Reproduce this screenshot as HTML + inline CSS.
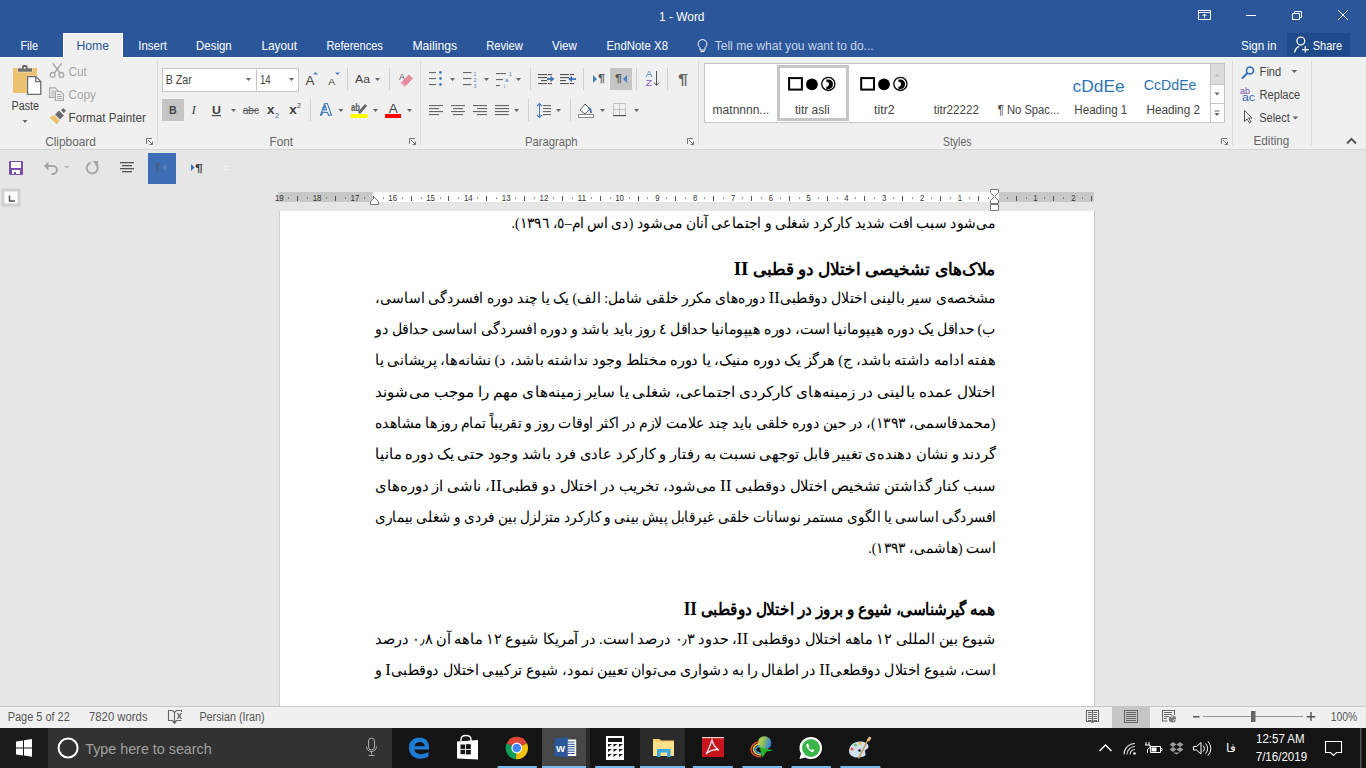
<!DOCTYPE html>
<html><head><meta charset="utf-8"><title>1 - Word</title>
<style>html,body{margin:0;padding:0;width:1366px;height:768px;overflow:hidden;background:#e6e6e6}
svg{position:absolute;left:0;top:0;font-family:"Liberation Sans",sans-serif}</style></head>
<body><svg width="1366" height="768" viewBox="0 0 1366 768">
<rect x="0" y="0" width="1366" height="57" fill="#2b579a" />
<rect x="0" y="57" width="1366" height="92" fill="#f0f0f0" />
<rect x="0" y="149" width="1366" height="1" fill="#d5d5d5" />
<rect x="0" y="150" width="1366" height="556" fill="#e6e6e6" />
<rect x="63" y="33" width="60" height="24" fill="#f0f0f0" />
<rect x="0" y="57" width="1366" height="1" fill="#fafbfc" />
<path d="M63.5 57V33.5H122.5V57" fill="none" stroke="#ffffff" stroke-width="1" />
<rect x="64" y="34" width="58" height="24" fill="#f0f0f0" />
<text x="659" y="21" font-size="12" fill="#fff" textLength="45.5" lengthAdjust="spacingAndGlyphs" >1 - Word</text>
<path d="M1198.5 10.5h12v9h-12z M1198.5 12.5h12 M1204.5 18v-4 M1202.5 16l2-2 2 2" fill="none" stroke="#fff" stroke-width="1" />
<path d="M1246 15.5h10" fill="none" stroke="#fff" stroke-width="1" />
<path d="M1292.5 13.5h7v6h-7z M1294.5 13.5v-2h7v6h-2" fill="none" stroke="#fff" stroke-width="1" />
<path d="M1338 10l10 10 M1348 10l-10 10" fill="none" stroke="#fff" stroke-width="1" />
<text x="20.4" y="49.5" font-size="13" fill="#fff" textLength="17.6" lengthAdjust="spacingAndGlyphs" >File</text>
<text x="138.2" y="49.5" font-size="13" fill="#fff" textLength="28.8" lengthAdjust="spacingAndGlyphs" >Insert</text>
<text x="196.1" y="49.5" font-size="13" fill="#fff" textLength="35.6" lengthAdjust="spacingAndGlyphs" >Design</text>
<text x="261.4" y="49.5" font-size="13" fill="#fff" textLength="35.6" lengthAdjust="spacingAndGlyphs" >Layout</text>
<text x="326.4" y="49.5" font-size="13" fill="#fff" textLength="56.4" lengthAdjust="spacingAndGlyphs" >References</text>
<text x="412.5" y="49.5" font-size="13" fill="#fff" textLength="44.5" lengthAdjust="spacingAndGlyphs" >Mailings</text>
<text x="486.2" y="49.5" font-size="13" fill="#fff" textLength="36.7" lengthAdjust="spacingAndGlyphs" >Review</text>
<text x="552" y="49.5" font-size="13" fill="#fff" textLength="24.8" lengthAdjust="spacingAndGlyphs" >View</text>
<text x="606.5" y="49.5" font-size="13" fill="#fff" textLength="61.5" lengthAdjust="spacingAndGlyphs" >EndNote X8</text>
<text x="76.4" y="49.5" font-size="13" fill="#2b579a" textLength="32.6" lengthAdjust="spacingAndGlyphs" >Home</text>
<path d="M702.5 39.5a4.5 4.5 0 0 0-2.5 8.2v2.3h5v-2.3a4.5 4.5 0 0 0-2.5-8.2z M700.5 51.5h4" fill="none" stroke="#fff" stroke-width="1" />
<text x="714.7" y="49.5" font-size="13" fill="#c5d3e8" textLength="159" lengthAdjust="spacingAndGlyphs" >Tell me what you want to do...</text>
<text x="1240.9" y="49.5" font-size="13" fill="#fff" textLength="35.5" lengthAdjust="spacingAndGlyphs" >Sign in</text>
<rect x="1287" y="33" width="63" height="23" fill="#1f4a8a" />
<circle cx="1300.8" cy="41" r="3.9" fill="none" stroke="#fff" stroke-width="1.3"/>
<path d="M1294.6 52.3c0.6-3 2.2-5 4.6-6" fill="none" stroke="#fff" stroke-width="1.3" />
<path d="M1302 49.6h7 M1305.3 46v6.6" fill="none" stroke="#fff" stroke-width="1.2" />
<text x="1312.8" y="49.5" font-size="13" fill="#fff" textLength="29.3" lengthAdjust="spacingAndGlyphs" >Share</text>
<rect x="13" y="68" width="24" height="25" fill="#ecc170" />
<rect x="17.3" y="67.6" width="15.4" height="4.8" fill="#f6e3bb" />
<rect x="18" y="68.3" width="14" height="3.4" fill="#6d6d6d" />
<path d="M22 68.5v-2a1.5 1.5 0 0 1 1.5-1.5h2.5a1.5 1.5 0 0 1 1.5 1.5v2z" fill="#6d6d6d" />
<circle cx="24.8" cy="67.8" r="0.9" fill="#fff"/>
<path d="M26.8 75.8h9.5l5.5 5.5v14h-15z" fill="#f0f0f0" />
<path d="M27.6 76.6h8.2l5 5v12.8h-13.2z" fill="#fff" stroke="#6d6d6d" stroke-width="1.3" />
<path d="M35.8 76.6v5h5" fill="none" stroke="#6d6d6d" stroke-width="1.3" />
<text x="11.5" y="110" font-size="12" fill="#444" textLength="27.5" lengthAdjust="spacingAndGlyphs" >Paste</text>
<path d="M22.5 120h5l-2.5 3z" fill="#666" />
<path d="M52.9 63.4l6.8 9.2 M61.5 63.4l-6.8 9.2" fill="none" stroke="#a6a6a6" stroke-width="1.5" />
<circle cx="52.6" cy="74.9" r="2.4" fill="none" stroke="#a6a6a6" stroke-width="1.3"/>
<circle cx="61.4" cy="74.9" r="2.4" fill="none" stroke="#a6a6a6" stroke-width="1.3"/>
<text x="68.5" y="76" font-size="12" fill="#a6a6a6" textLength="18.4" lengthAdjust="spacingAndGlyphs" >Cut</text>
<path d="M49.6 87.9h5.5l2.5 2.5v7h-8z" fill="#f0f0f0" stroke="#a6a6a6" stroke-width="1.1" />
<rect x="51.3" y="90.5" width="3" height="1" fill="#a6a6a6" />
<rect x="51.3" y="92.5" width="3" height="1" fill="#a6a6a6" />
<rect x="51.3" y="94.5" width="3" height="1" fill="#a6a6a6" />
<path d="M55.3 91.4h5.3l2.8 2.8v6.3h-8.1z" fill="#f0f0f0" stroke="#a6a6a6" stroke-width="1.1" />
<rect x="57" y="94" width="4" height="1" fill="#a6a6a6" />
<rect x="57" y="96" width="5" height="1" fill="#a6a6a6" />
<rect x="57" y="98" width="5" height="1" fill="#a6a6a6" />
<text x="68.5" y="98.5" font-size="12" fill="#a6a6a6" textLength="27.5" lengthAdjust="spacingAndGlyphs" >Copy</text>
<path d="M49.5 117.5l4.5-2.5 5.5 5.5-2.5 4z" fill="#ecc170" />
<path d="M55 114.5l4-4 5 5-4 4z" fill="#6d6d6d" />
<path d="M61 110.2l2.2-2.2 2.8 2.8-2.2 2.2z" fill="#6d6d6d" />
<text x="68.5" y="122" font-size="12" fill="#444" textLength="77.3" lengthAdjust="spacingAndGlyphs" >Format Painter</text>
<text x="45.2" y="145.6" font-size="12" fill="#666" textLength="50.7" lengthAdjust="spacingAndGlyphs" >Clipboard</text>
<path d="M146.5 144v-5.5h5.5 M148 140l4.5 4.5 M152.5 141.5v3h-3" fill="none" stroke="#777" stroke-width="1" />
<rect x="157" y="61" width="1" height="84" fill="#dadada" />
<rect x="162" y="68" width="94" height="23" fill="#fff" stroke="#c6c6c6" stroke-width="1" transform="translate(0.5 0.5)"/>
<rect x="256" y="68" width="42" height="23" fill="#fff" stroke="#c6c6c6" stroke-width="1" transform="translate(0.5 0.5)"/>
<text x="165.8" y="83.7" font-size="12" fill="#444" textLength="26" lengthAdjust="spacingAndGlyphs" >B Zar</text>
<path d="M246 78h5l-2.5 3z" fill="#666" />
<text x="259.9" y="83.7" font-size="12" fill="#444" textLength="10.9" lengthAdjust="spacingAndGlyphs" >14</text>
<path d="M289 78h5l-2.5 3z" fill="#666" />
<text x="305.5" y="84.6" font-size="13" fill="#444" textLength="9" lengthAdjust="spacingAndGlyphs" >A</text>
<path d="M313 74.5l2.5-2.5 2.5 2.5z" fill="#4a7ebb" />
<text x="328.3" y="84.6" font-size="9.5" fill="#444" textLength="7" lengthAdjust="spacingAndGlyphs" >A</text>
<path d="M335 72.5h5l-2.5 2.5z" fill="#4a7ebb" />
<rect x="347" y="68" width="1" height="22" fill="#d0d0d0" />
<text x="355" y="82.8" font-size="11.5" fill="#444" textLength="15" lengthAdjust="spacingAndGlyphs" >Aa</text>
<path d="M375 78h5l-2.5 3z" fill="#666" />
<rect x="389" y="68" width="1" height="22" fill="#d0d0d0" />
<text x="399" y="79.6" font-size="9" fill="#555" textLength="6" lengthAdjust="spacingAndGlyphs" >A</text>
<path d="M402 81.5l7-7 4 4-7 7z" fill="#e6899d" />
<path d="M402 81.5l4 4-1.5 1.5-4-4z" fill="#e6899d" />
<path d="M401.8 83.3l4 4" fill="none" stroke="#f3f3f3" stroke-width="0.8" />
<rect x="162" y="99" width="22" height="22" fill="#c5c5c5" />
<text x="169" y="113.5" font-size="11.5" fill="#444" font-weight="bold" textLength="7.7" lengthAdjust="spacingAndGlyphs" >B</text>
<text x="191.5" y="113.5" font-size="13" fill="#444" font-family="Liberation Serif" font-style="italic">I</text>
<text x="212" y="113.5" font-size="11.5" fill="#444" font-weight="bold" textLength="8.9" lengthAdjust="spacingAndGlyphs" >U</text>
<rect x="212" y="115" width="9" height="1.2" fill="#444" />
<path d="M231 109h5l-2.5 3z" fill="#666" />
<text x="242.7" y="113.5" font-size="11" fill="#555" textLength="16.3" lengthAdjust="spacingAndGlyphs" >abc</text>
<rect x="243" y="110" width="16" height="1" fill="#555" />
<text x="267" y="113.6" font-size="12" fill="#444" font-weight="bold" textLength="7.5" lengthAdjust="spacingAndGlyphs" >x</text>
<text x="275" y="117.5" font-size="7" fill="#2e6db5" textLength="4" lengthAdjust="spacingAndGlyphs" >2</text>
<text x="289.3" y="113.6" font-size="12" fill="#444" font-weight="bold" textLength="7.5" lengthAdjust="spacingAndGlyphs" >x</text>
<text x="297" y="108" font-size="7" fill="#444" textLength="4" lengthAdjust="spacingAndGlyphs" >2</text>
<rect x="310" y="99" width="1" height="22" fill="#d0d0d0" />
<path d="M320.5 115.2L324.6 103.6h2.8L331.5 115.2h-3l-1-2.9h-5l-1 2.9z M323.4 109.9h3.2l-1.6-4.6z" fill="#f4f8fc" stroke="#4a7ebb" stroke-width="1.2" fill-rule="evenodd" stroke-linejoin="round"/>
<path d="M338.4 109h5l-2.5 3z" fill="#666" />
<text x="351" y="110.5" font-size="10" fill="#555" font-weight="bold" textLength="9" lengthAdjust="spacingAndGlyphs" >ab</text>
<path d="M358 112l7-8 2 2-7 8z" fill="#666" />
<rect x="350.6" y="114" width="17" height="4" fill="#ffff00" />
<path d="M373 109h5l-2.5 3z" fill="#666" />
<text x="388.8" y="113" font-size="13" fill="#444" textLength="9" lengthAdjust="spacingAndGlyphs" >A</text>
<rect x="385" y="114" width="16" height="4" fill="#ff0000" />
<path d="M407 109h5l-2.5 3z" fill="#666" />
<text x="269.5" y="145.6" font-size="12" fill="#666" textLength="23.5" lengthAdjust="spacingAndGlyphs" >Font</text>
<path d="M409.5 144v-5.5h5.5 M411 140l4.5 4.5 M415.5 141.5v3h-3" fill="none" stroke="#777" stroke-width="1" />
<rect x="420" y="61" width="1" height="84" fill="#dadada" />
<rect x="429" y="72" width="7" height="1.1" fill="#666" />
<rect x="429" y="78" width="7" height="1.1" fill="#666" />
<rect x="429" y="84" width="7" height="1.1" fill="#666" />
<circle cx="440.5" cy="72.5" r="1.4" fill="#4a7ebb"/>
<circle cx="440.5" cy="78.5" r="1.4" fill="#4a7ebb"/>
<circle cx="440.5" cy="84.5" r="1.4" fill="#4a7ebb"/>
<path d="M450 78h5l-2.5 3z" fill="#666" />
<rect x="463" y="72" width="8.5" height="1.1" fill="#666" />
<rect x="463" y="78" width="8.5" height="1.1" fill="#666" />
<rect x="463" y="84" width="8.5" height="1.1" fill="#666" />
<text x="473.5" y="75.5" font-size="5" fill="#4a7ebb" >1</text>
<text x="473.5" y="81.5" font-size="5" fill="#4a7ebb" >2</text>
<text x="473.5" y="87.5" font-size="5" fill="#4a7ebb" >3</text>
<path d="M484 78h5l-2.5 3z" fill="#666" />
<rect x="496" y="73" width="10" height="1.1" fill="#666" />
<rect x="496" y="79" width="7" height="1.1" fill="#666" />
<rect x="496" y="85" width="4" height="1.1" fill="#666" />
<text x="509" y="75.5" font-size="5" fill="#4a7ebb" >1</text>
<text x="505" y="82" font-size="6" fill="#4a7ebb" >a</text>
<text x="504" y="88" font-size="5" fill="#4a7ebb" >i</text>
<path d="M516 78h5l-2.5 3z" fill="#666" />
<rect x="530" y="68" width="1" height="22" fill="#d0d0d0" />
<rect x="538" y="74" width="9" height="1.1" fill="#555" />
<rect x="538" y="77" width="9" height="1.1" fill="#555" />
<rect x="541" y="80" width="6" height="1.1" fill="#555" />
<rect x="538" y="83" width="9" height="1.1" fill="#555" />
<rect x="548" y="74" width="4" height="1.1" fill="#555" />
<rect x="548" y="83" width="4" height="1.1" fill="#555" />
<path d="M547 79h4.5" fill="none" stroke="#3a6fb8" stroke-width="1.8" />
<path d="M550.5 75.8l3.8 3.2-3.8 3.2z" fill="#3a6fb8" />
<rect x="560" y="74" width="9" height="1.1" fill="#555" />
<rect x="560" y="77" width="9" height="1.1" fill="#555" />
<rect x="560" y="80" width="6" height="1.1" fill="#555" />
<rect x="560" y="83" width="9" height="1.1" fill="#555" />
<rect x="570" y="74" width="4" height="1.1" fill="#555" />
<rect x="570" y="83" width="4" height="1.1" fill="#555" />
<path d="M571.5 79h4.5" fill="none" stroke="#3a6fb8" stroke-width="1.8" />
<path d="M572 75.8l-3.8 3.2 3.8 3.2z" fill="#3a6fb8" />
<rect x="583" y="68" width="1" height="22" fill="#d0d0d0" />
<path d="M593 75v8l4-4z" fill="#4a7ebb" />
<text x="598" y="82" font-size="10" fill="#555" font-weight="bold" textLength="7" lengthAdjust="spacingAndGlyphs" >¶</text>
<rect x="610" y="68" width="22" height="22" fill="#c5c5c5" />
<text x="615" y="82" font-size="10" fill="#555" font-weight="bold" textLength="7" lengthAdjust="spacingAndGlyphs" >¶</text>
<path d="M627 75v8l-4-4z" fill="#4a7ebb" />
<rect x="636" y="68" width="1" height="22" fill="#d0d0d0" />
<text x="645.8" y="77.3" font-size="9" fill="#4a7ebb" textLength="6.4" lengthAdjust="spacingAndGlyphs" >A</text>
<text x="645.8" y="85.8" font-size="9" fill="#8a5bb5" textLength="6.4" lengthAdjust="spacingAndGlyphs" >Z</text>
<path d="M656.5 71v14 M654 82.5l2.5 3 2.5-3" fill="none" stroke="#555" stroke-width="1" />
<rect x="667" y="68" width="1" height="22" fill="#d0d0d0" />
<text x="678" y="83.5" font-size="14" fill="#666" font-weight="bold" textLength="10" lengthAdjust="spacingAndGlyphs" >¶</text>
<rect x="429" y="105" width="14" height="1.1" fill="#666" />
<rect x="429" y="108" width="10" height="1.1" fill="#666" />
<rect x="429" y="111" width="14" height="1.1" fill="#666" />
<rect x="429" y="114" width="10" height="1.1" fill="#666" />
<rect x="451.0" y="105" width="14" height="1.1" fill="#666" />
<rect x="453.0" y="108" width="10" height="1.1" fill="#666" />
<rect x="451.0" y="111" width="14" height="1.1" fill="#666" />
<rect x="453.0" y="114" width="10" height="1.1" fill="#666" />
<rect x="473" y="105" width="14" height="1.1" fill="#666" />
<rect x="477" y="108" width="10" height="1.1" fill="#666" />
<rect x="473" y="111" width="14" height="1.1" fill="#666" />
<rect x="477" y="114" width="10" height="1.1" fill="#666" />
<rect x="495" y="105" width="14" height="1.1" fill="#666" />
<rect x="495" y="108" width="14" height="1.1" fill="#666" />
<rect x="495" y="111" width="14" height="1.1" fill="#666" />
<rect x="495" y="114" width="14" height="1.1" fill="#666" />
<path d="M514 109h5l-2.5 3z" fill="#666" />
<rect x="528" y="99" width="1" height="22" fill="#d0d0d0" />
<path d="M539.5 103.5v14 M537 106l2.5-2.5 2.5 2.5 M537 115l2.5 2.5 2.5-2.5" fill="none" stroke="#4a7ebb" stroke-width="1.1" />
<rect x="543" y="105" width="8" height="1.1" fill="#666" />
<rect x="543" y="108" width="8" height="1.1" fill="#666" />
<rect x="543" y="111" width="8" height="1.1" fill="#666" />
<rect x="543" y="114" width="8" height="1.1" fill="#666" />
<path d="M556 109h5l-2.5 3z" fill="#666" />
<rect x="570" y="99" width="1" height="22" fill="#d0d0d0" />
<path d="M580 110l5-6 5 5-5 5z" fill="#fff" stroke="#666" stroke-width="1" />
<path d="M588 108c2 0 3 2 3 5" fill="none" stroke="#4a7ebb" stroke-width="2" />
<rect x="578.5" y="114.5" width="15" height="3" fill="#fff" stroke="#888" stroke-width="1"/>
<path d="M600 109h5l-2.5 3z" fill="#666" />
<path d="M613.5 103.5h12v12h-12z M619.5 103.5v12 M613.5 109.5h12" fill="none" stroke="#888" stroke-width="1" stroke-dasharray="1 1" opacity="0.8"/>
<rect x="613" y="115" width="13" height="1.2" fill="#555" />
<path d="M634 109h5l-2.5 3z" fill="#666" />
<text x="524.9" y="145.6" font-size="12" fill="#666" textLength="52.7" lengthAdjust="spacingAndGlyphs" >Paragraph</text>
<path d="M687.5 144v-5.5h5.5 M689 140l4.5 4.5 M693.5 141.5v3h-3" fill="none" stroke="#777" stroke-width="1" />
<rect x="698" y="61" width="1" height="84" fill="#dadada" />
<rect x="704" y="63" width="520" height="59" fill="#fff" stroke="#c6c6c6" stroke-width="1" transform="translate(0.5 0.5)"/>
<rect x="1210" y="63" width="1" height="59" fill="#c6c6c6" />
<rect x="1211" y="64" width="13" height="20" fill="#dcdcdc" />
<rect x="1211" y="84" width="13" height="1" fill="#c6c6c6" />
<rect x="1211" y="103" width="13" height="1" fill="#c6c6c6" />
<path d="M1214.5 76.5l2.5-2.5 2.5 2.5z" fill="#bbb" />
<path d="M1214.5 92.5h5l-2.5 3z" fill="#666" />
<rect x="1214.5" y="110.5" width="5" height="1" fill="#666" />
<path d="M1214.5 113h5l-2.5 3z" fill="#666" />
<text x="712.6" y="113.6" font-size="12" fill="#444" textLength="56.8" lengthAdjust="spacingAndGlyphs" >matnnnn...</text>
<rect x="778.5" y="66.5" width="69" height="53" fill="none" stroke="#c6c6c6" stroke-width="3"/>
<rect x="789.1" y="78.1" width="12.8" height="11.5" fill="#fff" stroke="#000" stroke-width="2"/>
<circle cx="811.9" cy="84.3" r="5.9" fill="#000"/>
<circle cx="828.3" cy="83.9" r="6.6" fill="#fff" stroke="#000" stroke-width="1.3"/>
<path d="M826.3 79.4h1.8a4.8 4.8 0 0 1 0 9.8h-1.8v-2.4h1a2.3 2.6 0 0 0 0-5h-1z" fill="#000" />
<rect x="861.2" y="78.1" width="12.8" height="11.5" fill="#fff" stroke="#000" stroke-width="2"/>
<circle cx="884.0" cy="84.3" r="5.9" fill="#000"/>
<circle cx="900.4" cy="83.9" r="6.6" fill="#fff" stroke="#000" stroke-width="1.3"/>
<path d="M898.4 79.4h1.8a4.8 4.8 0 0 1 0 9.8h-1.8v-2.4h1a2.3 2.6 0 0 0 0-5h-1z" fill="#000" />
<text x="794.9" y="113.6" font-size="12" fill="#444" textLength="34.8" lengthAdjust="spacingAndGlyphs" >titr asli</text>
<text x="874" y="113.6" font-size="12" fill="#444" textLength="20.7" lengthAdjust="spacingAndGlyphs" >titr2</text>
<text x="933.7" y="113.6" font-size="12" fill="#444" textLength="45.2" lengthAdjust="spacingAndGlyphs" >titr22222</text>
<text x="997.8" y="113.6" font-size="12" fill="#444" textLength="61.5" lengthAdjust="spacingAndGlyphs" >¶ No Spac...</text>
<text x="1072.5" y="92" font-size="17" fill="#2e74b5" textLength="52.2" lengthAdjust="spacingAndGlyphs" >cDdEe</text>
<text x="1074.3" y="113.6" font-size="12" fill="#444" textLength="53" lengthAdjust="spacingAndGlyphs" >Heading 1</text>
<text x="1143.8" y="90" font-size="14" fill="#2e74b5" textLength="52.7" lengthAdjust="spacingAndGlyphs" >CcDdEe</text>
<text x="1146.4" y="113.6" font-size="12" fill="#444" textLength="53.6" lengthAdjust="spacingAndGlyphs" >Heading 2</text>
<text x="943" y="145.6" font-size="12" fill="#666" textLength="28.4" lengthAdjust="spacingAndGlyphs" >Styles</text>
<path d="M1221.5 144v-5.5h5.5 M1223 140l4.5 4.5 M1227.5 141.5v3h-3" fill="none" stroke="#777" stroke-width="1" />
<rect x="1232" y="61" width="1" height="84" fill="#dadada" />
<circle cx="1250" cy="70.5" r="3.5" fill="none" stroke="#2e6db5" stroke-width="1.6"/>
<path d="M1247.5 73l-5.5 5.5" fill="none" stroke="#2e6db5" stroke-width="2" />
<text x="1259.6" y="75.6" font-size="12" fill="#444" textLength="21.6" lengthAdjust="spacingAndGlyphs" >Find</text>
<path d="M1291.5 70h5.7l-2.85 3z" fill="#666" />
<text x="1240" y="93.5" font-size="8.5" fill="#7b4fa6" textLength="10" lengthAdjust="spacingAndGlyphs" >ab</text>
<text x="1242" y="100.8" font-size="10" fill="#2e6db5" textLength="13" lengthAdjust="spacingAndGlyphs" >ac</text>
<text x="1259.6" y="99.1" font-size="12" fill="#444" textLength="40.6" lengthAdjust="spacingAndGlyphs" >Replace</text>
<path d="M1244.5 110.5v11l2.5-2.5 2.5 4 1.5-1-2.5-4h3.5z" fill="#fff" stroke="#555" stroke-width="1" />
<text x="1259.2" y="121.6" font-size="12" fill="#444" textLength="30.6" lengthAdjust="spacingAndGlyphs" >Select</text>
<path d="M1292.4 116.5h6l-3.0 3z" fill="#666" />
<text x="1253.5" y="144.7" font-size="12" fill="#666" textLength="35.8" lengthAdjust="spacingAndGlyphs" >Editing</text>
<rect x="1311" y="61" width="1" height="84" fill="#dadada" />
<path d="M1347 143.5l4.5-4.5 4.5 4.5" fill="none" stroke="#555" stroke-width="2" />
<rect x="9" y="161" width="14" height="14" fill="#7a4fa5" rx="1"/>
<rect x="11" y="162" width="10" height="6" fill="#fff" />
<rect x="12" y="170" width="8" height="4" fill="#fff" />
<rect x="14" y="172" width="2" height="2" fill="#7a4fa5" />
<path d="M46 166h7a4 4 0 0 1 0 8h-1.5" fill="none" stroke="#a6a6a6" stroke-width="2" />
<path d="M44 166l4.5-4.5v9z" fill="#a6a6a6" />
<path d="M64.5 166h4.5l-2.25 2.5z" fill="#b0b0b0" />
<path d="M95.5 163.5a5.5 5.5 0 1 1-5-0.8" fill="none" stroke="#a6a6a6" stroke-width="2" />
<path d="M92.5 161h5.5v5.5z" fill="#a6a6a6" />
<rect x="120" y="162" width="14" height="1.3" fill="#555" />
<rect x="122" y="165" width="10" height="1.3" fill="#555" />
<rect x="120" y="168" width="14" height="1.3" fill="#555" />
<rect x="122" y="171" width="10" height="1.3" fill="#555" />
<rect x="148" y="153" width="28" height="31" fill="#3d6db5" />
<path d="M160 163.5l-3 0 v8 M158 163.5v8" fill="none" stroke="#4f5e73" stroke-width="1" />
<path d="M166 164v7l-3.5-3.5z" fill="#5a82b8" />
<path d="M191 164v7l3.5-3.5z" fill="#3a6fb8" />
<text x="195" y="171.7" font-size="10" fill="#444" font-weight="bold" textLength="8" lengthAdjust="spacingAndGlyphs" >¶</text>
<rect x="224" y="166" width="4" height="1" fill="#f3f3f3" />
<rect x="224" y="169" width="4" height="1" fill="#f3f3f3" />
<rect x="3" y="190" width="16" height="15" fill="#fff" stroke="#d0d0d0" stroke-width="3"/>
<path d="M9.5 195.5v5.5h5.5" fill="none" stroke="#555" stroke-width="1.5" />
<rect x="278" y="192" width="816" height="10" fill="#c8c8c8" />
<rect x="372.7" y="192" width="626.1" height="10" fill="#fff" />
<text x="274.9099999999999" y="200.8" font-size="9" fill="#333" textLength="8.8" lengthAdjust="spacingAndGlyphs" >19</text>
<rect x="288" y="197.5" width="1" height="1.2" fill="#555" />
<rect x="297" y="196" width="1" height="5" fill="#555" />
<rect x="307" y="197.5" width="1" height="1.2" fill="#555" />
<text x="312.71999999999997" y="200.8" font-size="9" fill="#333" textLength="8.8" lengthAdjust="spacingAndGlyphs" >18</text>
<rect x="326" y="197.5" width="1" height="1.2" fill="#555" />
<rect x="335" y="196" width="1" height="5" fill="#555" />
<rect x="345" y="197.5" width="1" height="1.2" fill="#555" />
<text x="350.53000000000003" y="200.8" font-size="9" fill="#333" textLength="8.8" lengthAdjust="spacingAndGlyphs" >17</text>
<rect x="364" y="197.5" width="1" height="1.2" fill="#555" />
<rect x="373" y="196" width="1" height="5" fill="#555" />
<rect x="383" y="197.5" width="1" height="1.2" fill="#555" />
<text x="388.34" y="200.8" font-size="9" fill="#333" textLength="8.8" lengthAdjust="spacingAndGlyphs" >16</text>
<rect x="402" y="197.5" width="1" height="1.2" fill="#555" />
<rect x="411" y="196" width="1" height="5" fill="#555" />
<rect x="421" y="197.5" width="1" height="1.2" fill="#555" />
<text x="426.1499999999999" y="200.8" font-size="9" fill="#333" textLength="8.8" lengthAdjust="spacingAndGlyphs" >15</text>
<rect x="440" y="197.5" width="1" height="1.2" fill="#555" />
<rect x="448" y="196" width="1" height="5" fill="#555" />
<rect x="458" y="197.5" width="1" height="1.2" fill="#555" />
<text x="463.96" y="200.8" font-size="9" fill="#333" textLength="8.8" lengthAdjust="spacingAndGlyphs" >14</text>
<rect x="477" y="197.5" width="1" height="1.2" fill="#555" />
<rect x="486" y="196" width="1" height="5" fill="#555" />
<rect x="496" y="197.5" width="1" height="1.2" fill="#555" />
<text x="501.77" y="200.8" font-size="9" fill="#333" textLength="8.8" lengthAdjust="spacingAndGlyphs" >13</text>
<rect x="515" y="197.5" width="1" height="1.2" fill="#555" />
<rect x="524" y="196" width="1" height="5" fill="#555" />
<rect x="534" y="197.5" width="1" height="1.2" fill="#555" />
<text x="539.58" y="200.8" font-size="9" fill="#333" textLength="8.8" lengthAdjust="spacingAndGlyphs" >12</text>
<rect x="553" y="197.5" width="1" height="1.2" fill="#555" />
<rect x="562" y="196" width="1" height="5" fill="#555" />
<rect x="572" y="197.5" width="1" height="1.2" fill="#555" />
<text x="577.39" y="200.8" font-size="9" fill="#333" textLength="8.8" lengthAdjust="spacingAndGlyphs" >11</text>
<rect x="591" y="197.5" width="1" height="1.2" fill="#555" />
<rect x="600" y="196" width="1" height="5" fill="#555" />
<rect x="610" y="197.5" width="1" height="1.2" fill="#555" />
<text x="615.2" y="200.8" font-size="9" fill="#333" textLength="8.8" lengthAdjust="spacingAndGlyphs" >10</text>
<rect x="629" y="197.5" width="1" height="1.2" fill="#555" />
<rect x="638" y="196" width="1" height="5" fill="#555" />
<rect x="647" y="197.5" width="1" height="1.2" fill="#555" />
<text x="655.2600000000001" y="200.8" font-size="9" fill="#333" textLength="4.3" lengthAdjust="spacingAndGlyphs" >9</text>
<rect x="666" y="197.5" width="1" height="1.2" fill="#555" />
<rect x="675" y="196" width="1" height="5" fill="#555" />
<rect x="685" y="197.5" width="1" height="1.2" fill="#555" />
<text x="693.07" y="200.8" font-size="9" fill="#333" textLength="4.3" lengthAdjust="spacingAndGlyphs" >8</text>
<rect x="704" y="197.5" width="1" height="1.2" fill="#555" />
<rect x="713" y="196" width="1" height="5" fill="#555" />
<rect x="723" y="197.5" width="1" height="1.2" fill="#555" />
<text x="730.88" y="200.8" font-size="9" fill="#333" textLength="4.3" lengthAdjust="spacingAndGlyphs" >7</text>
<rect x="742" y="197.5" width="1" height="1.2" fill="#555" />
<rect x="751" y="196" width="1" height="5" fill="#555" />
<rect x="761" y="197.5" width="1" height="1.2" fill="#555" />
<text x="768.69" y="200.8" font-size="9" fill="#333" textLength="4.3" lengthAdjust="spacingAndGlyphs" >6</text>
<rect x="780" y="197.5" width="1" height="1.2" fill="#555" />
<rect x="789" y="196" width="1" height="5" fill="#555" />
<rect x="799" y="197.5" width="1" height="1.2" fill="#555" />
<text x="806.5000000000001" y="200.8" font-size="9" fill="#333" textLength="4.3" lengthAdjust="spacingAndGlyphs" >5</text>
<rect x="818" y="197.5" width="1" height="1.2" fill="#555" />
<rect x="827" y="196" width="1" height="5" fill="#555" />
<rect x="837" y="197.5" width="1" height="1.2" fill="#555" />
<text x="844.3100000000001" y="200.8" font-size="9" fill="#333" textLength="4.3" lengthAdjust="spacingAndGlyphs" >4</text>
<rect x="855" y="197.5" width="1" height="1.2" fill="#555" />
<rect x="864" y="196" width="1" height="5" fill="#555" />
<rect x="874" y="197.5" width="1" height="1.2" fill="#555" />
<text x="882.12" y="200.8" font-size="9" fill="#333" textLength="4.3" lengthAdjust="spacingAndGlyphs" >3</text>
<rect x="893" y="197.5" width="1" height="1.2" fill="#555" />
<rect x="902" y="196" width="1" height="5" fill="#555" />
<rect x="912" y="197.5" width="1" height="1.2" fill="#555" />
<text x="919.9300000000001" y="200.8" font-size="9" fill="#333" textLength="4.3" lengthAdjust="spacingAndGlyphs" >2</text>
<rect x="931" y="197.5" width="1" height="1.2" fill="#555" />
<rect x="940" y="196" width="1" height="5" fill="#555" />
<rect x="950" y="197.5" width="1" height="1.2" fill="#555" />
<text x="957.7400000000001" y="200.8" font-size="9" fill="#333" textLength="4.3" lengthAdjust="spacingAndGlyphs" >1</text>
<rect x="969" y="197.5" width="1" height="1.2" fill="#555" />
<rect x="978" y="196" width="1" height="5" fill="#555" />
<rect x="988" y="197.5" width="1" height="1.2" fill="#555" />
<rect x="1007" y="197.5" width="1" height="1.2" fill="#555" />
<rect x="1016" y="196" width="1" height="5" fill="#555" />
<rect x="1026" y="197.5" width="1" height="1.2" fill="#555" />
<text x="1033.36" y="200.8" font-size="9" fill="#333" textLength="4.3" lengthAdjust="spacingAndGlyphs" >1</text>
<rect x="1044" y="197.5" width="1" height="1.2" fill="#555" />
<rect x="1053" y="196" width="1" height="5" fill="#555" />
<rect x="1063" y="197.5" width="1" height="1.2" fill="#555" />
<text x="1071.1699999999998" y="200.8" font-size="9" fill="#333" textLength="4.3" lengthAdjust="spacingAndGlyphs" >2</text>
<rect x="1082" y="197.5" width="1" height="1.2" fill="#555" />
<rect x="1091" y="196" width="1" height="5" fill="#555" />
<path d="M370.5 204.5h8v-3l-4-4-4 4z" fill="#fff" stroke="#777" stroke-width="1" />
<path d="M990.5 189.5h8v3l-4 4 -4-4z M994.5 196.5l4 4v3h-8v-3z M990.5 204.5h8v6h-8z" fill="#fff" stroke="#777" stroke-width="1" />
<rect x="280" y="211" width="814" height="495" fill="#fff" />
<rect x="279" y="211" width="1" height="495" fill="#cfcfcf" />
<rect x="1094" y="211" width="1" height="495" fill="#c8c8c8" />
<rect x="0" y="706" width="1366" height="22" fill="#f0f0f0" />
<rect x="0" y="706" width="1366" height="1" fill="#c6c6c6" />
<text x="7.7" y="721.1" font-size="12" fill="#555" textLength="62.1" lengthAdjust="spacingAndGlyphs" >Page 5 of 22</text>
<text x="89" y="721.1" font-size="12" fill="#555" textLength="58.6" lengthAdjust="spacingAndGlyphs" >7820 words</text>
<path d="M181.5 712v-1.5h-5l-2 2-2-2h-4v10h4l2 1.5 2-1.5h5 M174.5 712.5v10.5 M172.8 721.5l1.7 1.7 1.7-1.7" fill="none" stroke="#666" stroke-width="1.1" />
<path d="M177.3 713.2l4.2 5.6 M181.5 713.2l-4.2 5.6" fill="none" stroke="#666" stroke-width="1.4" />
<text x="199.4" y="721.1" font-size="12" fill="#555" textLength="65.3" lengthAdjust="spacingAndGlyphs" >Persian (Iran)</text>
<path d="M1086.5 710.5h12v11h-12z" fill="none" stroke="#666" stroke-width="1.1" />
<rect x="1088" y="712" width="3.6" height="1" fill="#666" />
<rect x="1093.4" y="712" width="3.6" height="1" fill="#666" />
<rect x="1088" y="714" width="3.6" height="1" fill="#666" />
<rect x="1093.4" y="714" width="3.6" height="1" fill="#666" />
<rect x="1088" y="716" width="3.6" height="1" fill="#666" />
<rect x="1093.4" y="716" width="3.6" height="1" fill="#666" />
<rect x="1088" y="718" width="3.6" height="1" fill="#666" />
<rect x="1093.4" y="718" width="3.6" height="1" fill="#666" />
<rect x="1088" y="720" width="3.6" height="1" fill="#666" />
<rect x="1093.4" y="720" width="3.6" height="1" fill="#666" />
<rect x="1092" y="711" width="1" height="11.5" fill="#666" />
<path d="M1091 721.5l1.5 1.5 1.5-1.5" fill="none" stroke="#666" stroke-width="1" />
<rect x="1112" y="707" width="38" height="21" fill="#c6c6c6" />
<path d="M1124.5 710.5h13v12h-13z" fill="none" stroke="#666" stroke-width="1.1" />
<rect x="1126" y="712" width="10" height="1" fill="#666" />
<rect x="1126" y="714" width="10" height="1" fill="#666" />
<rect x="1126" y="716" width="10" height="1" fill="#666" />
<rect x="1126" y="718" width="10" height="1" fill="#666" />
<rect x="1126" y="720" width="10" height="1" fill="#666" />
<path d="M1174.5 715v-4.5h-12v10.5h5" fill="none" stroke="#666" stroke-width="1.1" />
<rect x="1164" y="712" width="8" height="1" fill="#666" />
<rect x="1164" y="714" width="8" height="1" fill="#666" />
<rect x="1164" y="716" width="5" height="1" fill="#666" />
<rect x="1164" y="718" width="3" height="1" fill="#666" />
<circle cx="1172.5" cy="719" r="4.5" fill="#f0f0f0"/><circle cx="1172.5" cy="719" r="3.6" fill="#777"/>
<path d="M1170.5 716.5l1.5 1 1 -1.5 M1173 721.5l1.5-2 1.5 0.5" fill="none" stroke="#f0f0f0" stroke-width="0.9" />
<rect x="1193" y="716" width="6.5" height="1.5" fill="#555" />
<rect x="1203" y="716" width="100" height="1" fill="#999" />
<rect x="1251" y="711" width="4.5" height="11" fill="#666" />
<rect x="1306.6" y="716" width="8.7" height="1.5" fill="#555" />
<rect x="1310.2" y="712" width="1.5" height="9" fill="#555" />
<text x="1330.7" y="721.1" font-size="12" fill="#555" textLength="26.4" lengthAdjust="spacingAndGlyphs" >100%</text>
<rect x="0" y="728" width="1366" height="40" fill="#141414" />
<rect x="0" y="728" width="48" height="40" fill="#1b1b1b" />
<rect x="48" y="728" width="344" height="40" fill="#323232" />
<path d="M16 741.5l7-1v7h-7z M24 740.3l8-1.2v8.4h-8z M16 748.5h7v7l-7-1z M24 748.5h8v8.2l-8-1.2z" fill="#fff" />
<circle cx="68.1" cy="748" r="9.5" fill="none" stroke="#fff" stroke-width="2"/>
<text x="85.2" y="753.8" font-size="15" fill="#a0a0a0" textLength="126.5" lengthAdjust="spacingAndGlyphs" >Type here to search</text>
<path d="M368.5 741a3 3 0 0 1 6 0v6a3 3 0 0 1-6 0z M366.5 746.5a5 5 0 0 0 10 0 M371.5 751.5v3 M368.5 755.5h6" fill="none" stroke="#aaa" stroke-width="1" />
<path d="M419.5 737.5c-6.5 0-10.5 4.5-10.5 10.5 0 6.5 5 10.7 11 10.7 3.2 0 6-0.8 8.5-2.2v-4.5c-2.3 1.4-4.8 2.2-7.5 2.2-3.5 0-6.2-1.8-6.7-4.7h14.8v-2.2c0-6.2-3.8-9.8-9.6-9.8z M414.5 746.2c0.6-2.6 2.8-4.2 5.4-4.2 2.6 0 4.6 1.5 4.8 4.2z" fill="#1e7bd6" fill-rule="evenodd"/>
<path d="M409.5 745c1.5-3.5 5-6 9-6.5" fill="none" stroke="#1e7bd6" stroke-width="1.2" />
<path d="M457 741.5l21-1.5v19.5l-21-1z" fill="#fff" />
<path d="M461 741v-1.5c0-2.5 2-4 5-4s5 1.5 5 4v1.5" fill="none" stroke="#fff" stroke-width="1.4" />
<rect x="460.5" y="744.5" width="4.6" height="4.4" fill="#141414" />
<rect x="466" y="744.2" width="4.8" height="4.7" fill="#141414" />
<rect x="460.5" y="749.8" width="4.6" height="4.4" fill="#141414" />
<rect x="466" y="749.8" width="4.8" height="4.6" fill="#141414" />
<path d="M516.8 748L506.65 743.27A11.2 11.2 0 0 1 526.95 743.27z" fill="#db4437" />
<path d="M516.8 748L526.95 743.27A11.2 11.2 0 0 1 515.82 759.16z" fill="#f4c20d" />
<path d="M516.8 748L515.82 759.16A11.2 11.2 0 0 1 506.65 743.27z" fill="#0f9d58" />
<circle cx="516.8" cy="748" r="5.4" fill="#fff"/><circle cx="516.8" cy="748" r="4.3" fill="#4285f4"/>
<rect x="497.6" y="766" width="39.2" height="2" fill="#76b9ed" />
<rect x="542" y="728" width="44" height="40" fill="#474747" />
<rect x="542" y="766" width="44" height="2" fill="#76b9ed" />
<rect x="586" y="728" width="4" height="40" fill="#2b2b2b" />
<path d="M554.3 738.5l13.5-1.5v20.5l-13.5-1.5z" fill="#2b579a" />
<rect x="567.8" y="739.5" width="8.4" height="16.5" fill="#fff" />
<rect x="567.8" y="741.5" width="7" height="1" fill="#2b579a" />
<rect x="567.8" y="743.8" width="7" height="1" fill="#2b579a" />
<rect x="567.8" y="746.1" width="7" height="1" fill="#2b579a" />
<rect x="567.8" y="748.4" width="7" height="1" fill="#2b579a" />
<rect x="567.8" y="750.7" width="7" height="1" fill="#2b579a" />
<rect x="567.8" y="753.0" width="7" height="1" fill="#2b579a" />
<text x="556" y="751.5" font-size="8.5" fill="#fff" font-weight="bold" textLength="9" lengthAdjust="spacingAndGlyphs" >W</text>
<rect x="606" y="736" width="18" height="24" fill="#fff" />
<rect x="608" y="738" width="14" height="4" fill="#141414" />
<path d="M608.0 744h4l-4 3z" fill="#141414" />
<path d="M613.5 744h4l-4 3z" fill="#141414" />
<path d="M619.0 744h4l-4 3z" fill="#141414" />
<path d="M608.0 749h4l-4 3z" fill="#141414" />
<path d="M613.5 749h4l-4 3z" fill="#141414" />
<path d="M619.0 749h4l-4 3z" fill="#141414" />
<path d="M608.0 754h4l-4 3z" fill="#141414" />
<path d="M613.5 754h4l-4 3z" fill="#141414" />
<path d="M619.0 754h4l-4 3z" fill="#141414" />
<rect x="595.2" y="766" width="39.3" height="2" fill="#76b9ed" />
<rect x="640" y="728" width="45" height="40" fill="#2b2b2b" />
<rect x="640" y="766" width="45" height="2" fill="#76b9ed" />
<path d="M653 739h6.5l1.5 1.5h13v15.5h-21z" fill="#f5d06a" />
<rect x="653" y="742" width="21" height="14" fill="#fbe08c" />
<path d="M657 749h13.5v8h-3.5v-4.5h-6.5v4.5h-3.5z" fill="#3aa9e0" />
<rect x="702" y="737" width="22" height="20" fill="#c4161c" />
<rect x="702" y="737" width="22" height="1.2" fill="#f0d0d0" />
<path d="M706 754c2-3 4-8 6-14c1 4 3 8 7 10c-4-1-8 0-12 3z" fill="none" stroke="#fff" stroke-width="1.1" />
<rect x="692.8" y="766" width="40" height="2" fill="#76b9ed" />
<defs><linearGradient id="gl" x1="0" y1="0" x2="1" y2="0.3"><stop offset="0" stop-color="#d8e04a"/><stop offset="0.5" stop-color="#8cc060"/><stop offset="1" stop-color="#3a7fd5"/></linearGradient></defs>
<circle cx="764.5" cy="743" r="6.8" fill="url(#gl)"/>
<path d="M759 741.5c-4 1-8 4-8 8 0 4 4 7 10 7.5" fill="none" stroke="#d9532c" stroke-width="1.6" />
<path d="M759.5 743.5c-3 1-6 3-6 6 0 3 3 5 8 5.5" fill="none" stroke="#e9c23a" stroke-width="1.6" />
<path d="M760 745.5c-2 1-4.5 2-4.5 4 0 2 2 3.5 6 4" fill="none" stroke="#3a9ad8" stroke-width="1.6" />
<path d="M759.5 747l14 3.5-7 1-4 6z" fill="#22b52a" />
<rect x="742.4" y="766" width="39.6" height="2" fill="#76b9ed" />
<path d="M811 737a11 11 0 0 1 0 22c-2 0-4-0.5-5.5-1.5l-6 1.5 1.5-5.5c-1-1.5-1.5-3.5-1.5-5.5a11 11 0 0 1 11.5-11z" fill="#fff" />
<circle cx="811" cy="748" r="9" fill="#3bb54a"/>
<path d="M807 743.5c-1 1-1 3 1 5.5s4.5 3.5 5.5 2.5l1-1-2-1.5-1 1c-1 0-3-2-3-3l1-1-1.5-2z" fill="#fff" />
<rect x="791.5" y="766" width="39.4" height="2" fill="#76b9ed" />
<path d="M849 751c0-5.5 5-9.5 11-9.5 5.5 0 9 2.5 8.5 5.5-0.5 2.5-3.5 2-3.5 4.5 0 2.5 2 3.5-1.5 5-6 2.5-14.5 0.5-14.5-5.5z" fill="#cfe0f0" />
<circle cx="859.5" cy="750.5" r="1.3" fill="#1a1a1a"/>
<circle cx="852" cy="749" r="1.6" fill="#e0604a"/><circle cx="855.5" cy="745" r="1.6" fill="#6cc06a"/><circle cx="860" cy="743.5" r="1.6" fill="#f0c040"/>
<path d="M868 739.5l-9.5 19" fill="none" stroke="#c89450" stroke-width="1.6" />
<path d="M866.5 740l3-3.5 2 1.5-2.5 3.5z" fill="#e8c090" />
<rect x="840.4" y="766" width="40" height="2" fill="#76b9ed" />
<path d="M1099.5 751l6-6 6 6" fill="none" stroke="#fff" stroke-width="1.3" />
<path d="M1124 754.5a11 11 0 0 1 11-11 M1127 754.5a8 8 0 0 1 8-8 M1130 754.5a5 5 0 0 1 5-5" fill="none" stroke="#ddd" stroke-width="1.1" />
<circle cx="1134.5" cy="753.5" r="1.3" fill="#fff"/>
<path d="M1150.5 746.5h10v6h-10z M1160.5 748.5h1.5v2h-1.5" fill="none" stroke="#fff" stroke-width="1" />
<rect x="1151.5" y="747.5" width="5" height="4" fill="#fff" />
<path d="M1146 742v3 M1149 742v3 M1145 745h5v2.5l-2.5 2v3.5" fill="none" stroke="#fff" stroke-width="1" />
<path d="M1173 742l3.5 2.5-3.5 2.5-3.5-2.5z M1180 742l3.5 2.5-3.5 2.5-3.5-2.5z M1173 747l3.5 2.5 3.5-2.5 3.5 2.5-3.5 2.5-3.5-2.5-3.5 2.5-3.5-2.5z M1173 752.5l3.5 2 3.5-2" fill="#9a9a9a" />
<path d="M1193.5 746.5h3l4.5-4v11.5l-4.5-4h-3z M1203 745.5a4 4 0 0 1 0 6 M1205.5 743.5a7 7 0 0 1 0 10 M1208 741.5a10 10 0 0 1 0 14" fill="none" stroke="#fff" stroke-width="1" />
<text x="1226.4" y="752" font-size="12" fill="#fff" >فا</text>
<text x="1256" y="743.2" font-size="12" fill="#fff" textLength="48.6" lengthAdjust="spacingAndGlyphs" >12:57 AM</text>
<text x="1255.7" y="761.4" font-size="12" fill="#fff" textLength="51.5" lengthAdjust="spacingAndGlyphs" >7/16/2019</text>
<path d="M1325.5 741.5h16v11h-5l-3 3-3-3h-5z" fill="none" stroke="#fff" stroke-width="1.1" />
<rect x="1360" y="728" width="1.5" height="40" fill="#555" />
<text x="995.5" y="227.5" font-family="Liberation Serif" font-size="15" fill="#000" direction="rtl" textLength="483.9" lengthAdjust="spacingAndGlyphs">می‌شود سبب افت شدید کارکرد شغلی و اجتماعی آنان می‌شود (دی اس ام–٥، ١٣٩٦).</text>
<text x="995.5" y="274.5" font-family="Liberation Serif" font-size="17" fill="#000" direction="rtl" textLength="261.8" lengthAdjust="spacingAndGlyphs" font-weight="bold">ملاک‌های تشخیصی اختلال دو قطبی <tspan font-size="19">II</tspan></text>
<text x="995.5" y="302.5" font-family="Liberation Serif" font-size="15" fill="#000" direction="rtl" textLength="620.5" lengthAdjust="spacingAndGlyphs">مشخصه‌ی سیر بالینی اختلال دوقطبی<tspan font-size="17.5">II</tspan> دوره‌های مکرر خلقی شامل: الف) یک یا چند دوره افسردگی اساسی،</text>
<text x="995.5" y="333.9" font-family="Liberation Serif" font-size="15" fill="#000" direction="rtl" textLength="620.5" lengthAdjust="spacingAndGlyphs">ب) حداقل یک دوره هیپومانیا است، دوره هیپومانیا حداقل ٤ روز باید باشد و دوره افسردگی اساسی حداقل دو</text>
<text x="995.5" y="365.2" font-family="Liberation Serif" font-size="15" fill="#000" direction="rtl" textLength="620.5" lengthAdjust="spacingAndGlyphs">هفته ادامه داشته باشد، ج) هرگز یک دوره منیک، یا دوره مختلط وجود نداشته باشد، د) نشانه‌ها، پریشانی یا</text>
<text x="995.5" y="396.6" font-family="Liberation Serif" font-size="15" fill="#000" direction="rtl" textLength="620.5" lengthAdjust="spacingAndGlyphs">اختلال عمده بالینی در زمینه‌های کارکردی اجتماعی، شغلی یا سایر زمینه‌های مهم را موجب می‌شوند</text>
<text x="995.5" y="427.9" font-family="Liberation Serif" font-size="15" fill="#000" direction="rtl" textLength="620.5" lengthAdjust="spacingAndGlyphs">(محمدقاسمی، ١٣٩٣)، در حین دوره خلقی باید چند علامت لازم در اکثر اوقات روز و تقریباً تمام روزها مشاهده</text>
<text x="995.5" y="459.3" font-family="Liberation Serif" font-size="15" fill="#000" direction="rtl" textLength="620.5" lengthAdjust="spacingAndGlyphs">گردند و نشان دهنده‌ی تغییر قابل توجهی نسبت به رفتار و کارکرد عادی فرد باشد وجود حتی یک دوره مانیا</text>
<text x="995.5" y="490.7" font-family="Liberation Serif" font-size="15" fill="#000" direction="rtl" textLength="620.5" lengthAdjust="spacingAndGlyphs">سبب کنار گذاشتن تشخیص اختلال دوقطبی <tspan font-size="17.5">II</tspan> می‌شود، تخریب در اختلال دو قطبی<tspan font-size="17.5">II</tspan>، ناشی از دوره‌های</text>
<text x="995.5" y="522.0" font-family="Liberation Serif" font-size="15" fill="#000" direction="rtl" textLength="620.5" lengthAdjust="spacingAndGlyphs">افسردگی اساسی یا الگوی مستمر نوسانات خلقی غیرقابل پیش بینی و کارکرد متزلزل بین فردی و شغلی بیماری</text>
<text x="995.5" y="553.4" font-family="Liberation Serif" font-size="15" fill="#000" direction="rtl" textLength="127.3" lengthAdjust="spacingAndGlyphs">است (هاشمی، ١٣٩٣).</text>
<text x="995.5" y="614.8" font-family="Liberation Serif" font-size="17" fill="#000" direction="rtl" textLength="311.8" lengthAdjust="spacingAndGlyphs" font-weight="bold">همه گیرشناسی، شیوع و بروز در اختلال دوقطبی <tspan font-size="19">II</tspan></text>
<text x="995.5" y="643.5" font-family="Liberation Serif" font-size="15" fill="#000" direction="rtl" textLength="620.5" lengthAdjust="spacingAndGlyphs">شیوع بین المللی ١٢ ماهه اختلال دوقطبی <tspan font-size="17.5">II</tspan>، حدود ٠٫٣ درصد است. در آمریکا شیوع ١٢ ماهه آن ٠٫٨ درصد</text>
<text x="995.5" y="674.5" font-family="Liberation Serif" font-size="15" fill="#000" direction="rtl" textLength="620.5" lengthAdjust="spacingAndGlyphs">است، شیوع اختلال دوقطعی<tspan font-size="17.5">II</tspan> در اطفال را به دشواری می‌توان تعیین نمود، شیوع ترکیبی اختلال دوقطبی<tspan font-size="17.5">I</tspan> و</text>
</svg></body></html>
